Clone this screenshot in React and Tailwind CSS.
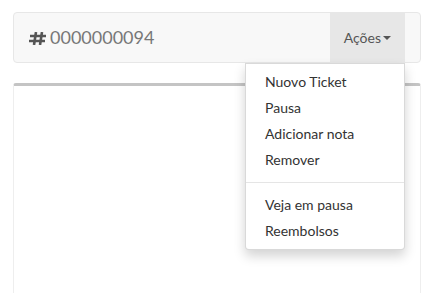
import React from 'react';

const menuItems = ['Nuovo Ticket', 'Pausa', 'Adicionar nota', 'Remover'];
const moreItems = ['Veja em pausa', 'Reembolsos'];

const Hashtag = () => (
  <svg width="17" height="13" viewBox="0 0 17 13" className="mr-[4px] mt-[1px]" fill="none" stroke="#555">
    <path d="M7 0 L5 13 M13 0 L11 13" strokeWidth="2.6" />
    <path d="M1 4 H17 M0 9 H16" strokeWidth="2.4" />
  </svg>
);

export default function App() {
  return (
    <div className="min-h-[293px] bg-white pt-[12px] pl-[13px] pr-[8px] font-['Lato','Liberation_Sans',sans-serif] overflow-hidden h-[293px]">
      {/* Navbar */}
      <div className="relative flex h-[51px] items-stretch justify-between rounded-[4px] border border-[#e7e7e7] bg-[#f8f8f8]">
        <div className="flex items-center pl-[15px] text-[18px] text-[#777]">
          <Hashtag />
          <span>0000000094</span>
        </div>
        <div className="relative mr-[15px] flex items-center bg-[#e7e7e7] px-[14px] text-[14px] text-[#555]">
          Ações
          <span className="ml-[2px] mt-[1px] inline-block h-0 w-0 border-x-[4px] border-t-[4px] border-x-transparent border-t-[#555]" />
          {/* Dropdown */}
          <div className="absolute right-0 top-[50px] z-10 w-[160px] rounded-b-[4px] border border-[rgba(0,0,0,0.15)] bg-white py-[5px] shadow-[0_6px_12px_rgba(0,0,0,0.175)]">
            {menuItems.map((item) => (
              <div key={item} className="px-[19px] py-[3px] text-[14px] leading-[20px] text-[#333]">
                {item}
              </div>
            ))}
            <div className="my-[9px] h-px bg-[#e5e5e5]" />
            {moreItems.map((item) => (
              <div key={item} className="px-[19px] py-[3px] text-[14px] leading-[20px] text-[#333]">
                {item}
              </div>
            ))}
          </div>
        </div>
      </div>

      {/* Panel */}
      <div className="mt-[20px] h-[240px] rounded-[3px] border border-[#eee] border-t-[3px] border-t-[#c4c4c4] bg-white" />
    </div>
  );
}
